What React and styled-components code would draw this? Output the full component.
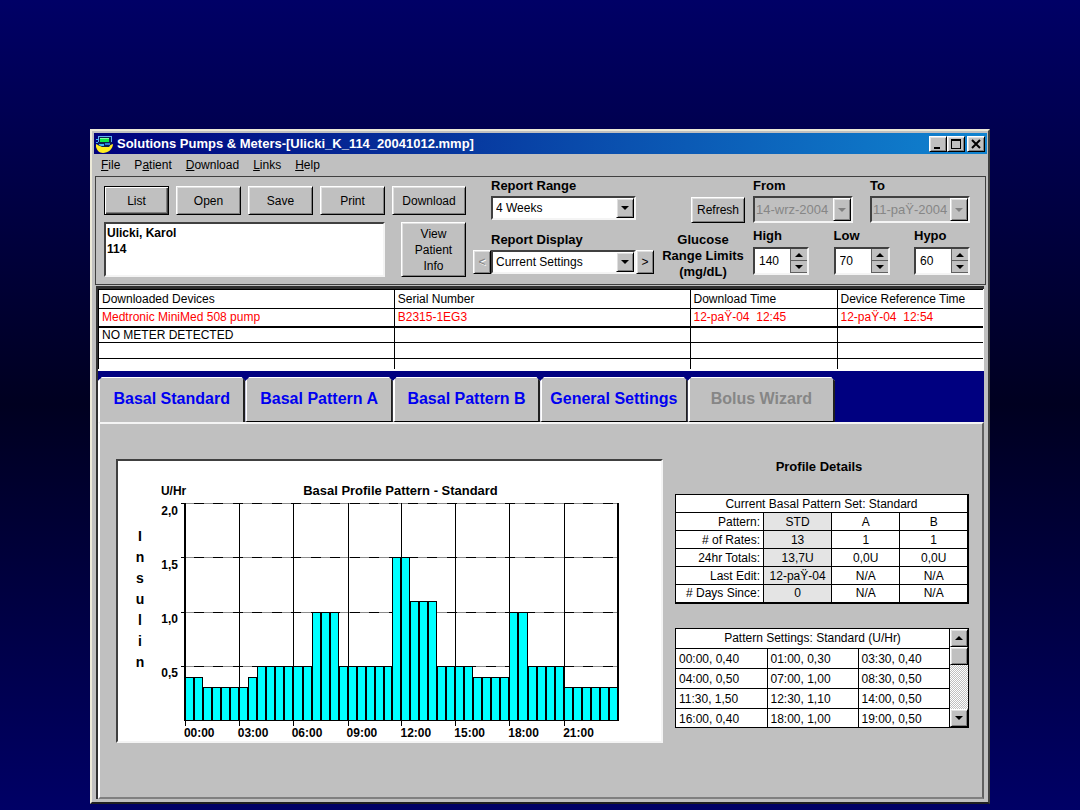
import React from 'react';
import styled, { createGlobalStyle, css } from 'styled-components';

const Global = createGlobalStyle`
  *, *::before, *::after { box-sizing: border-box; }
  body {
    margin: 0;
    color: #000;
    font: 12px/16px "Liberation Sans", Arial, sans-serif;
    background: #000066;
  }
  button, input, select, textarea { font: inherit; color: inherit; margin: 0; border-radius: 0; }
`;

const raised = css`
  border: 1px solid;
  border-color: #fff #000 #000 #fff;
  box-shadow: inset 1px 1px 0 #dfdfdf, inset -1px -1px 0 #808080;
  background: #c0c0c0;
`;

const sunken = css`
  border: 2px solid;
  border-color: #404040 #f4f4f4 #f4f4f4 #404040;
`;

const Desktop = styled.div`
  min-height: 100vh;
  padding: 129px 90px 6px;
  display: flex;
  flex-direction: column;
  background: linear-gradient(#000066, #000020 50%, #000066);
`;

const Window = styled.main`
  flex: 1;
  display: flex;
  flex-direction: column;
  min-width: 900px;
  padding: 2px 1px 3px 2px;
  background: #c0c0c0;
  border: 2px solid;
  border-color: #ece9d8 #404040 #202020 #ece9d8;
`;

const TitleBar = styled.header`
  display: flex;
  align-items: center;
  height: 21px;
  padding: 0 2px 0 1px;
  gap: 3px;
  color: #fff;
  background: linear-gradient(90deg, #00007b, #0a52b0 60%, #1084d0);
`;

const Title = styled.h1`
  flex: 1;
  margin: 0;
  font-size: 13px;
  line-height: 16px;
`;

const CaptionButtons = styled.div`
  display: flex;
`;

const CaptionButton = styled.button`
  ${raised}
  display: grid;
  place-items: center;
  width: 18px;
  height: 16px;
  padding: 0;
  margin-left: ${(p) => (p.$apart ? 2 : 0)}px;
`;

const MenuBar = styled.nav`
  display: flex;
  align-items: center;
  height: 22px;
  padding-left: 7px;
  gap: 14px;
  a { color: #000; text-decoration: none; }
`;

const Toolbar = styled.section`
  display: flex;
  justify-content: space-between;
  height: 109px;
  margin: 0 1px;
  padding: 1px 15px 7px 8px;
  border: 1px solid #404040;
`;

const Actions = styled.div`
  display: flex;
  flex-direction: column;
  justify-content: space-between;
  width: 362px;
  padding-top: 8px;
`;

const ActionRow = styled.div`
  display: flex;
  justify-content: space-between;
`;

const Button = styled.button`
  ${raised}
  width: ${(p) => p.$width || 65}px;
  height: ${(p) => p.$height || 29}px;
  padding: 0;
  line-height: 16px;
  ${(p) => p.$default && css`
    border-color: #000;
    box-shadow: inset 1px 1px 0 #fff, inset -1px -1px 0 #404040, inset -2px -2px 0 #808080;
  `}
  &:disabled { color: #808080; text-shadow: 1px 1px 0 #fff; }
`;

const PatientBox = styled.textarea`
  ${sunken}
  display: block;
  width: 281px;
  height: 55px;
  padding: 1px;
  resize: none;
  background: #fff;
  font-weight: bold;
  outline: none;
`;

const Reports = styled.div`
  display: flex;
  flex-direction: column;
  gap: 12px;
`;

const Field = styled.div`
  display: flex;
  flex-direction: column;
  gap: ${(p) => p.$gap || 2}px;
`;

const Label = styled.label`
  font-size: 13px;
  font-weight: bold;
  line-height: 16px;
  padding-left: ${(p) => p.$indent || 0}px;
`;

const StepRow = styled.div`
  display: flex;
  padding-left: ${(p) => p.$indent || 0}px;
`;

const SelectFrame = styled.span`
  ${sunken}
  display: flex;
  width: ${(p) => p.$width}px;
  height: ${(p) => p.$height || 24}px;
  background: ${(p) => (p.$off ? '#c0c0c0' : '#fff')};
`;

const Select = styled.select`
  appearance: none;
  flex: 1;
  min-width: 0;
  padding: 0 3px;
  border: 0;
  background: transparent;
  outline: none;
  &:disabled { color: #868686; opacity: 1; font-size: 13px; padding: 0 1px; }
`;

const Cap = styled.span`
  ${raised}
  display: grid;
  place-items: center;
  width: 18px;
`;

const Limits = styled.div`
  display: flex;
  flex-direction: column;
  gap: 5px;
  width: 309px;
`;

const LimitRow = styled.div`
  display: flex;
  gap: 8px;
`;

const LimitFields = styled.div`
  flex: 1;
  display: flex;
  justify-content: space-between;
`;

const RefreshSlot = styled.div`
  display: flex;
  justify-content: flex-end;
  align-items: flex-end;
  width: 84px;
`;

const LimitsCaption = styled.div`
  width: 84px;
  padding-top: 4px;
  font-size: 13px;
  font-weight: bold;
  line-height: 16px;
  text-align: center;
  white-space: nowrap;
`;

const SpinFrame = styled.span`
  ${sunken}
  display: flex;
  width: 56px;
  height: 28px;
  background: #fff;
`;

const SpinInput = styled.input`
  flex: 1;
  min-width: 0;
  padding: 0 4px;
  border: 0;
  outline: none;
  background: transparent;
  appearance: textfield;
  &::-webkit-inner-spin-button { appearance: none; }
`;

const SpinButtons = styled.span`
  display: flex;
  flex-direction: column;
  width: 17px;
`;

const SpinButton = styled.button`
  flex: 1;
  display: grid;
  place-items: center;
  padding: 0;
  border: 1px solid #606060;
  border-width: 0 0 1px 1px;
  background: #c0c0c0;
`;

const Body = styled.section`
  flex: 1;
  display: flex;
  flex-direction: column;
  margin: 1px 3px 0 2px;
  border: solid #303030;
  border-width: 3px 0 0 2px;
`;

const DeviceFrame = styled.div`
  height: 82px;
  overflow: hidden;
  background: #fff;
  border: solid #fff;
  border-width: 0 1px 2px 0;
`;

const DeviceTable = styled.table`
  width: 100%;
  table-layout: fixed;
  border-collapse: collapse;
  border-left: 1px solid #000;
  col:nth-child(3) { width: 147px; }
  col:nth-child(4) { width: 146px; }
  th, td {
    height: 16px;
    padding: 0 3px;
    border: solid #000;
    border-width: 1px 0 1px 1px;
    font-weight: normal;
    line-height: 14px;
    text-align: left;
    white-space: nowrap;
  }
  th { height: 19px; }
`;

const PumpRow = styled.tr`
  color: #f00;
  td { height: 18px; border-bottom-width: 2px; }
`;

const TabStrip = styled.div`
  display: flex;
  height: 51px;
  padding: 6px 149px 0 0;
  background: #000080;
`;

const Tab = styled.button`
  flex: 1;
  min-width: 0;
  padding: 0 0 2px;
  border: 0;
  border-left: 2px solid #fff;
  border-right: 2px solid #202020;
  border-top: 1px solid #fff;
  border-bottom: ${(p) => (p.$active ? 0 : 1)}px solid #000;
  clip-path: polygon(0 4px, 4px 0, calc(100% - 4px) 0, 100% 4px, 100% 100%, 0 100%);
  background: #c0c0c0;
  color: #0000f0;
  font-size: 16px;
  font-weight: bold;
  white-space: nowrap;
  &:disabled { color: #868686; }
`;

const Panel = styled.div`
  flex: 1;
  display: flex;
  align-items: flex-start;
  gap: 12px;
  padding: 35px 13px 48px 16px;
  border: 2px solid;
  border-color: #f4f4f4 #606060 #808080 #fff;
`;

const ChartBox = styled.figure`
  ${sunken}
  flex: 1;
  min-width: 0;
  height: 284px;
  margin: 0;
  background: #fff;
  svg { display: block; width: 100%; height: 100%; }
`;

const Side = styled.aside`
  width: 294px;
`;

const SideTitle = styled.h2`
  margin: 0 0 19px;
  padding-right: 6px;
  font-size: 13px;
  line-height: 16px;
  text-align: center;
`;

const DataTable = styled.table`
  width: 100%;
  table-layout: fixed;
  border-collapse: collapse;
  background: #fff;
  th, td {
    height: ${(p) => p.$row}px;
    padding: 0 3px;
    border: 1px solid #000;
    font-weight: normal;
    line-height: 14px;
    text-align: ${(p) => p.$align};
    white-space: nowrap;
  }
  th[scope="row"] { text-align: right; }
  thead th { text-align: center; }
`;

const Summary = styled(DataTable)`
  border: 1px solid #000;
  border-right-width: 2px;
  border-bottom-width: 2px;
  margin-bottom: 24px;
  col:first-child { width: 88px; }
  tbody td { padding: 0; }
  tbody td:nth-child(2) { background: #e4e4e4; }
`;

const SettingsFrame = styled.div`
  display: flex;
  height: 100px;
  overflow: hidden;
  border: 1px solid #000;
  background: #fff;
`;

const SettingsTable = styled(DataTable)`
  flex: 1;
  border-style: hidden;
`;

const ScrollBar = styled.div`
  display: flex;
  flex-direction: column;
  width: 19px;
  border-left: 1px solid #000;
  background: repeating-conic-gradient(#fff 0 25%, #c0c0c0 0 50%) 0 0 / 2px 2px;
`;

const ScrollButton = styled.button`
  ${raised}
  display: grid;
  place-items: center;
  height: 18px;
  padding: 0;
`;

const ScrollTrack = styled.div`
  flex: 1;
`;

const ScrollThumb = styled.div`
  ${raised}
  height: 18px;
`;

const Arrow = ({ up, color = '#000' }) => (
  <svg width="8" height="4" viewBox="0 0 8 4" aria-hidden="true">
    <path d={up ? 'M0 4L4 0L8 4Z' : 'M0 0H8L4 4Z'} fill={color} />
  </svg>
);

const AppIcon = () => (
  <svg width="19" height="18" viewBox="0 0 19 18" aria-hidden="true">
    <path d="M1 9L5 11H12L18 9C18 14 13 18 8 18C4 18 2 15 1 12Z" fill="#ffee20" />
    <path d="M3 1H17V8L14 12H7L3 10Z" fill="#0c2050" />
    <path d="M3 1H17V2H4V7H3ZM16 2H17V7H16Z" fill="#60b0f0" />
    <path d="M5 3H14V7H5Z" fill="#10e848" />
    <path d="M1 4H3V5H1ZM1 7H3V8H1ZM4 9H9V11H6L4 10Z" fill="#40b8f8" />
    <path d="M10 8H15V10H10Z" fill="#2878d8" />
    <path d="M5 3H14V4H5Z" fill="#80ffa0" />
  </svg>
);

const DropDown = ({ id, value, width, height, disabled }) => (
  <SelectFrame $width={width} $height={height} $off={disabled}>
    <Select id={id} disabled={disabled} defaultValue={value}>
      <option>{value}</option>
    </Select>
    <Cap><Arrow color={disabled ? '#808080' : '#000'} /></Cap>
  </SelectFrame>
);

const Spinner = ({ label, value }) => {
  const id = `limit-${label}`;
  return (
    <Field $gap={3}>
      <Label htmlFor={id}>{label}</Label>
      <SpinFrame>
        <SpinInput id={id} type="number" defaultValue={value} />
        <SpinButtons>
          <SpinButton type="button" aria-label={`Raise ${label}`}><Arrow up /></SpinButton>
          <SpinButton type="button" aria-label={`Lower ${label}`}><Arrow /></SpinButton>
        </SpinButtons>
      </SpinFrame>
    </Field>
  );
};

const RATES = [
  [0.4, 2], [0.3, 5], [0.4, 1], [0.5, 6], [1, 3], [0.5, 6], [1.5, 2],
  [1.1, 3], [0.5, 4], [0.4, 4], [1, 2], [0.5, 4], [0.3, 6],
].flatMap(([rate, count]) => Array(count).fill(rate));

const LEFT = 67;
const TOP = 42;
const BASE = 259;
const slotX = (slot) => Math.round(LEFT + slot * 9.04);
const rateY = (rate) => Math.round(BASE - rate * 108.5);

const BasalChart = () => (
  <svg viewBox="0 0 544 280" role="img" aria-label="Basal profile"
    fontFamily='"Liberation Sans", Arial, sans-serif' fontWeight="bold" fontSize="12">
    <text x="43" y="34">U/Hr</text>
    <text x="283" y="34" fontSize="13" textAnchor="middle">Basal Profile Pattern - Standard</text>
    {'Insulin'.split('').map((letter, i) => (
      <text key={i} x="22" y={80 + i * 21} fontSize="14" textAnchor="middle">{letter}</text>
    ))}
    <g shapeRendering="crispEdges">
      {[2, 1.5, 1, 0.5].map((rate) => (
        <g key={rate}>
          <path d={`M63 ${rateY(rate) + 0.5}H501`} stroke="#8c8c8c" />
          <path d={`M63 ${rateY(rate) + 0.5}H67M76 ${rateY(rate) + 0.5}H501`} stroke="#000" strokeDasharray="10 9.5" />
        </g>
      ))}
      {[3, 6, 9, 12, 15, 18, 21].map((hour) => (
        <path key={hour} d={`M${slotX(hour * 2) + 0.5} ${TOP}V265`} stroke="#000" />
      ))}
      {RATES.map((rate, i) => (
        <rect key={i} x={slotX(i) + 0.5} y={rateY(rate) + 0.5} width={slotX(i + 1) - slotX(i) - 1}
          height={BASE - rateY(rate)} fill="#0ff" stroke="#000" />
      ))}
      <path d="M67 42V260M501 42V260" stroke="#000" strokeWidth="2" />
      <path d="M67 259.5H501M67.5 259V265" stroke="#000" />
    </g>
    {['2,0', '1,5', '1,0', '0,5'].map((tick, i) => (
      <text key={tick} x="60" y={54 + i * 54} textAnchor="end">{tick}</text>
    ))}
    {['00:00', '03:00', '06:00', '09:00', '12:00', '15:00', '18:00', '21:00'].map((time, i) => (
      <text key={time} x={slotX(i * 6) - 1} y="276">{time}</text>
    ))}
  </svg>
);

const MENU = [['', 'F', 'ile'], ['P', 'a', 'tient'], ['', 'D', 'ownload'], ['', 'L', 'inks'], ['', 'H', 'elp']];
const TABS = ['Basal Standard', 'Basal Pattern A', 'Basal Pattern B', 'General Settings', 'Bolus Wizard'];
const SUMMARY = [
  ['Pattern:', 'STD', 'A', 'B'],
  ['# of Rates:', '13', '1', '1'],
  ['24hr Totals:', '13,7U', '0,0U', '0,0U'],
  ['Last Edit:', '12-paŸ-04', 'N/A', 'N/A'],
  ['# Days Since:', '0', 'N/A', 'N/A'],
];
const SETTINGS = [
  ['00:00, 0,40', '01:00, 0,30', '03:30, 0,40'],
  ['04:00, 0,50', '07:00, 1,00', '08:30, 0,50'],
  ['11:30, 1,50', '12:30, 1,10', '14:00, 0,50'],
  ['16:00, 0,40', '18:00, 1,00', '19:00, 0,50'],
];

export default function App() {
  return (
    <Desktop>
      <Global />
      <Window>
        <TitleBar>
          <AppIcon />
          <Title>Solutions Pumps &amp; Meters-[Ulicki_K_114_20041012.mmp]</Title>
          <CaptionButtons>
            <CaptionButton aria-label="Minimize">
              <svg width="12" height="10"><path d="M2 8H8V10H2Z" /></svg>
            </CaptionButton>
            <CaptionButton aria-label="Maximize">
              <svg width="12" height="10"><path d="M1 0H11V10H1ZM2 2V9H10V2Z" fillRule="evenodd" /></svg>
            </CaptionButton>
            <CaptionButton aria-label="Close" $apart>
              <svg width="10" height="10"><path d="M1 1L9 9M9 1L1 9" stroke="#000" strokeWidth="2" /></svg>
            </CaptionButton>
          </CaptionButtons>
        </TitleBar>

        <MenuBar>
          {MENU.map(([before, key, after]) => (
            <a key={after} href="#menu">{before}<u>{key}</u>{after}</a>
          ))}
        </MenuBar>

        <Toolbar>
          <Actions>
            <ActionRow>
              <Button $default>List</Button>
              <Button>Open</Button>
              <Button>Save</Button>
              <Button>Print</Button>
              <Button $width={74}>Download</Button>
            </ActionRow>
            <ActionRow>
              <PatientBox aria-label="Patient" readOnly defaultValue={'Ulicki, Karol\n114'} />
              <Button $height={55}>View<br />Patient<br />Info</Button>
            </ActionRow>
          </Actions>

          <Reports>
            <Field>
              <Label htmlFor="range" $indent={18}>Report Range</Label>
              <StepRow $indent={18}>
                <DropDown id="range" value="4 Weeks" width={145} />
              </StepRow>
            </Field>
            <Field>
              <Label htmlFor="display" $indent={18}>Report Display</Label>
              <StepRow>
                <Button $width={18} $height={24} disabled>&lt;</Button>
                <DropDown id="display" value="Current Settings" width={145} />
                <Button $width={18} $height={24}>&gt;</Button>
              </StepRow>
            </Field>
          </Reports>

          <Limits>
            <LimitRow>
              <RefreshSlot><Button $width={54} $height={26}>Refresh</Button></RefreshSlot>
              <LimitFields>
                <Field>
                  <Label htmlFor="from">From</Label>
                  <DropDown id="from" value="14-wrz-2004" width={100} height={27} disabled />
                </Field>
                <Field>
                  <Label htmlFor="to">To</Label>
                  <DropDown id="to" value="11-paŸ-2004" width={100} height={27} disabled />
                </Field>
              </LimitFields>
            </LimitRow>
            <LimitRow>
              <LimitsCaption>Glucose<br />Range Limits<br />(mg/dL)</LimitsCaption>
              <LimitFields>
                <Spinner label="High" value={140} />
                <Spinner label="Low" value={70} />
                <Spinner label="Hypo" value={60} />
              </LimitFields>
            </LimitRow>
          </Limits>
        </Toolbar>

        <Body>
          <DeviceFrame>
            <DeviceTable>
              <colgroup><col /><col /><col /><col /></colgroup>
              <thead>
                <tr>
                  <th>Downloaded Devices</th>
                  <th>Serial Number</th>
                  <th>Download Time</th>
                  <th>Device Reference Time</th>
                </tr>
              </thead>
              <tbody>
                <PumpRow>
                  <td>Medtronic MiniMed 508 pump</td>
                  <td>B2315-1EG3</td>
                  <td>12-paŸ-04 &nbsp;12:45</td>
                  <td>12-paŸ-04 &nbsp;12:54</td>
                </PumpRow>
                <tr><td>NO METER DETECTED</td><td /><td /><td /></tr>
                <tr><td /><td /><td /><td /></tr>
                <tr><td /><td /><td /><td /></tr>
              </tbody>
            </DeviceTable>
          </DeviceFrame>

          <TabStrip role="tablist">
            {TABS.map((name, i) => (
              <Tab key={name} role="tab" aria-selected={i === 0} $active={i === 0} disabled={i === 4}>{name}</Tab>
            ))}
          </TabStrip>

          <Panel role="tabpanel">
            <ChartBox><BasalChart /></ChartBox>
            <Side>
              <SideTitle>Profile Details</SideTitle>
              <Summary $row={18} $align="center">
                <colgroup><col /><col /><col /><col /></colgroup>
                <thead><tr><th colSpan={4}>Current Basal Pattern Set: Standard</th></tr></thead>
                <tbody>
                  {SUMMARY.map(([name, ...cells]) => (
                    <tr key={name}>
                      <th scope="row">{name}</th>
                      {cells.map((cell, i) => <td key={i}>{cell}</td>)}
                    </tr>
                  ))}
                </tbody>
              </Summary>
              <SettingsFrame>
                <SettingsTable $row={20} $align="left">
                  <thead><tr><th colSpan={3}>Pattern Settings: Standard (U/Hr)</th></tr></thead>
                  <tbody>
                    {SETTINGS.map((row) => (
                      <tr key={row[0]}>{row.map((cell) => <td key={cell}>{cell}</td>)}</tr>
                    ))}
                  </tbody>
                </SettingsTable>
                <ScrollBar>
                  <ScrollButton aria-label="Scroll up"><Arrow up /></ScrollButton>
                  <ScrollTrack><ScrollThumb /></ScrollTrack>
                  <ScrollButton aria-label="Scroll down"><Arrow /></ScrollButton>
                </ScrollBar>
              </SettingsFrame>
            </Side>
          </Panel>
        </Body>
      </Window>
    </Desktop>
  );
}
